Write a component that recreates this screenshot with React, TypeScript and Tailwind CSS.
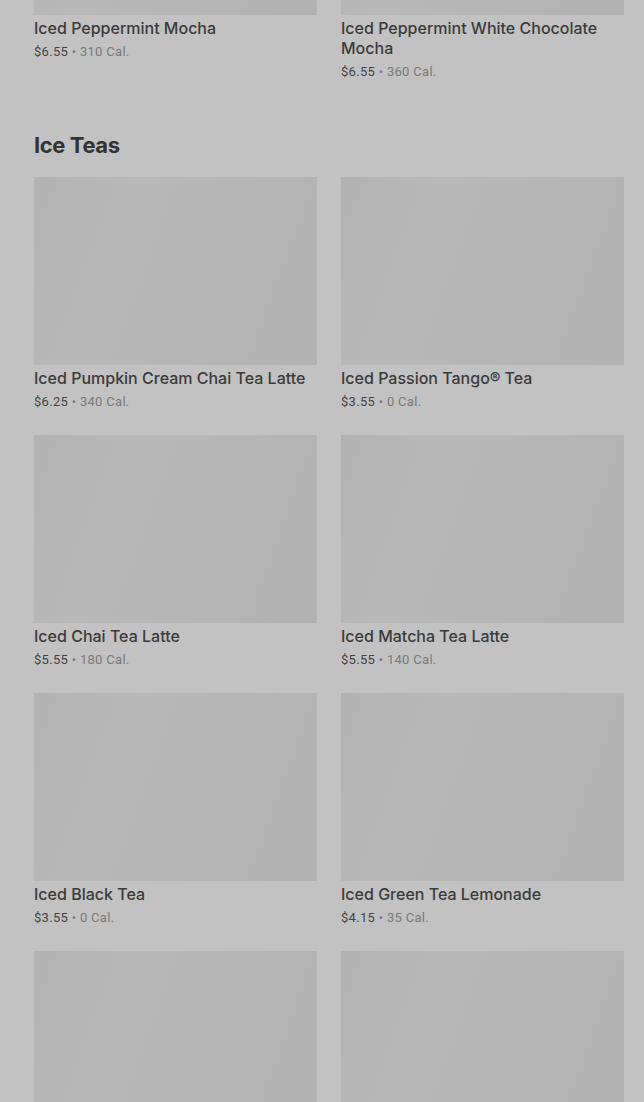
type Item = { name: string; price: string; cal: string };

const mochas: Item[] = [
  { name: "Iced Peppermint Mocha", price: "$6.55", cal: "310 Cal." },
  { name: "Iced Peppermint White Chocolate Mocha", price: "$6.55", cal: "360 Cal." },
];

const teas: Item[] = [
  { name: "Iced Pumpkin Cream Chai Tea Latte", price: "$6.25", cal: "340 Cal." },
  { name: "Iced Passion Tango® Tea", price: "$3.55", cal: "0 Cal." },
  { name: "Iced Chai Tea Latte", price: "$5.55", cal: "180 Cal." },
  { name: "Iced Matcha Tea Latte", price: "$5.55", cal: "140 Cal." },
  { name: "Iced Black Tea", price: "$3.55", cal: "0 Cal." },
  { name: "Iced Green Tea Lemonade", price: "$4.15", cal: "35 Cal." },
  { name: "Iced Black Tea Lemonade", price: "$4.15", cal: "35 Cal." },
  { name: "Iced Passion Tango® Tea Lemonade", price: "$4.15", cal: "45 Cal." },
];

function Card({ item }: { item: Item }) {
  return (
    <div className="flex flex-col">
      <div className="h-[188px] bg-[linear-gradient(110deg,#b2b2b2_0%,#b9b9b9_30%,#b5b5b5_60%,#b2b2b2_100%)]" />
      <div className="pt-[3px]">
        <h3 className="text-[16px] leading-5 font-medium text-[#3b3b3b] font-['Inter',sans-serif]">{item.name}</h3>
        <p className="mt-[4px] text-[13px] leading-[19px] tracking-[0.3px]">
          <span className="text-[#454545]">{item.price}</span>
          <span className="text-[#7a7a7a]"> • {item.cal}</span>
        </p>
      </div>
    </div>
  );
}

function Section({ title, items }: { title?: string; items: Item[] }) {
  return (
    <section>
      {title && (
        <h2 className="mb-4 text-[22px] leading-8 font-bold text-[#333333] font-['Inter',sans-serif] tracking-[-0.4px]">
          {title}
        </h2>
      )}
      <div className="grid grid-cols-2 gap-6">
        {items.map((it) => (
          <Card key={it.name} item={it} />
        ))}
      </div>
    </section>
  );
}

export default function App() {
  return (
    <div className="h-screen overflow-hidden bg-[#c2c2c2] font-['Roboto',sans-serif]">
      <div className="-mt-[173px] pl-[34px] pr-[20px] flex flex-col gap-12">
        <Section items={mochas} />
        <Section title="Ice Teas" items={teas} />
      </div>
    </div>
  );
}
